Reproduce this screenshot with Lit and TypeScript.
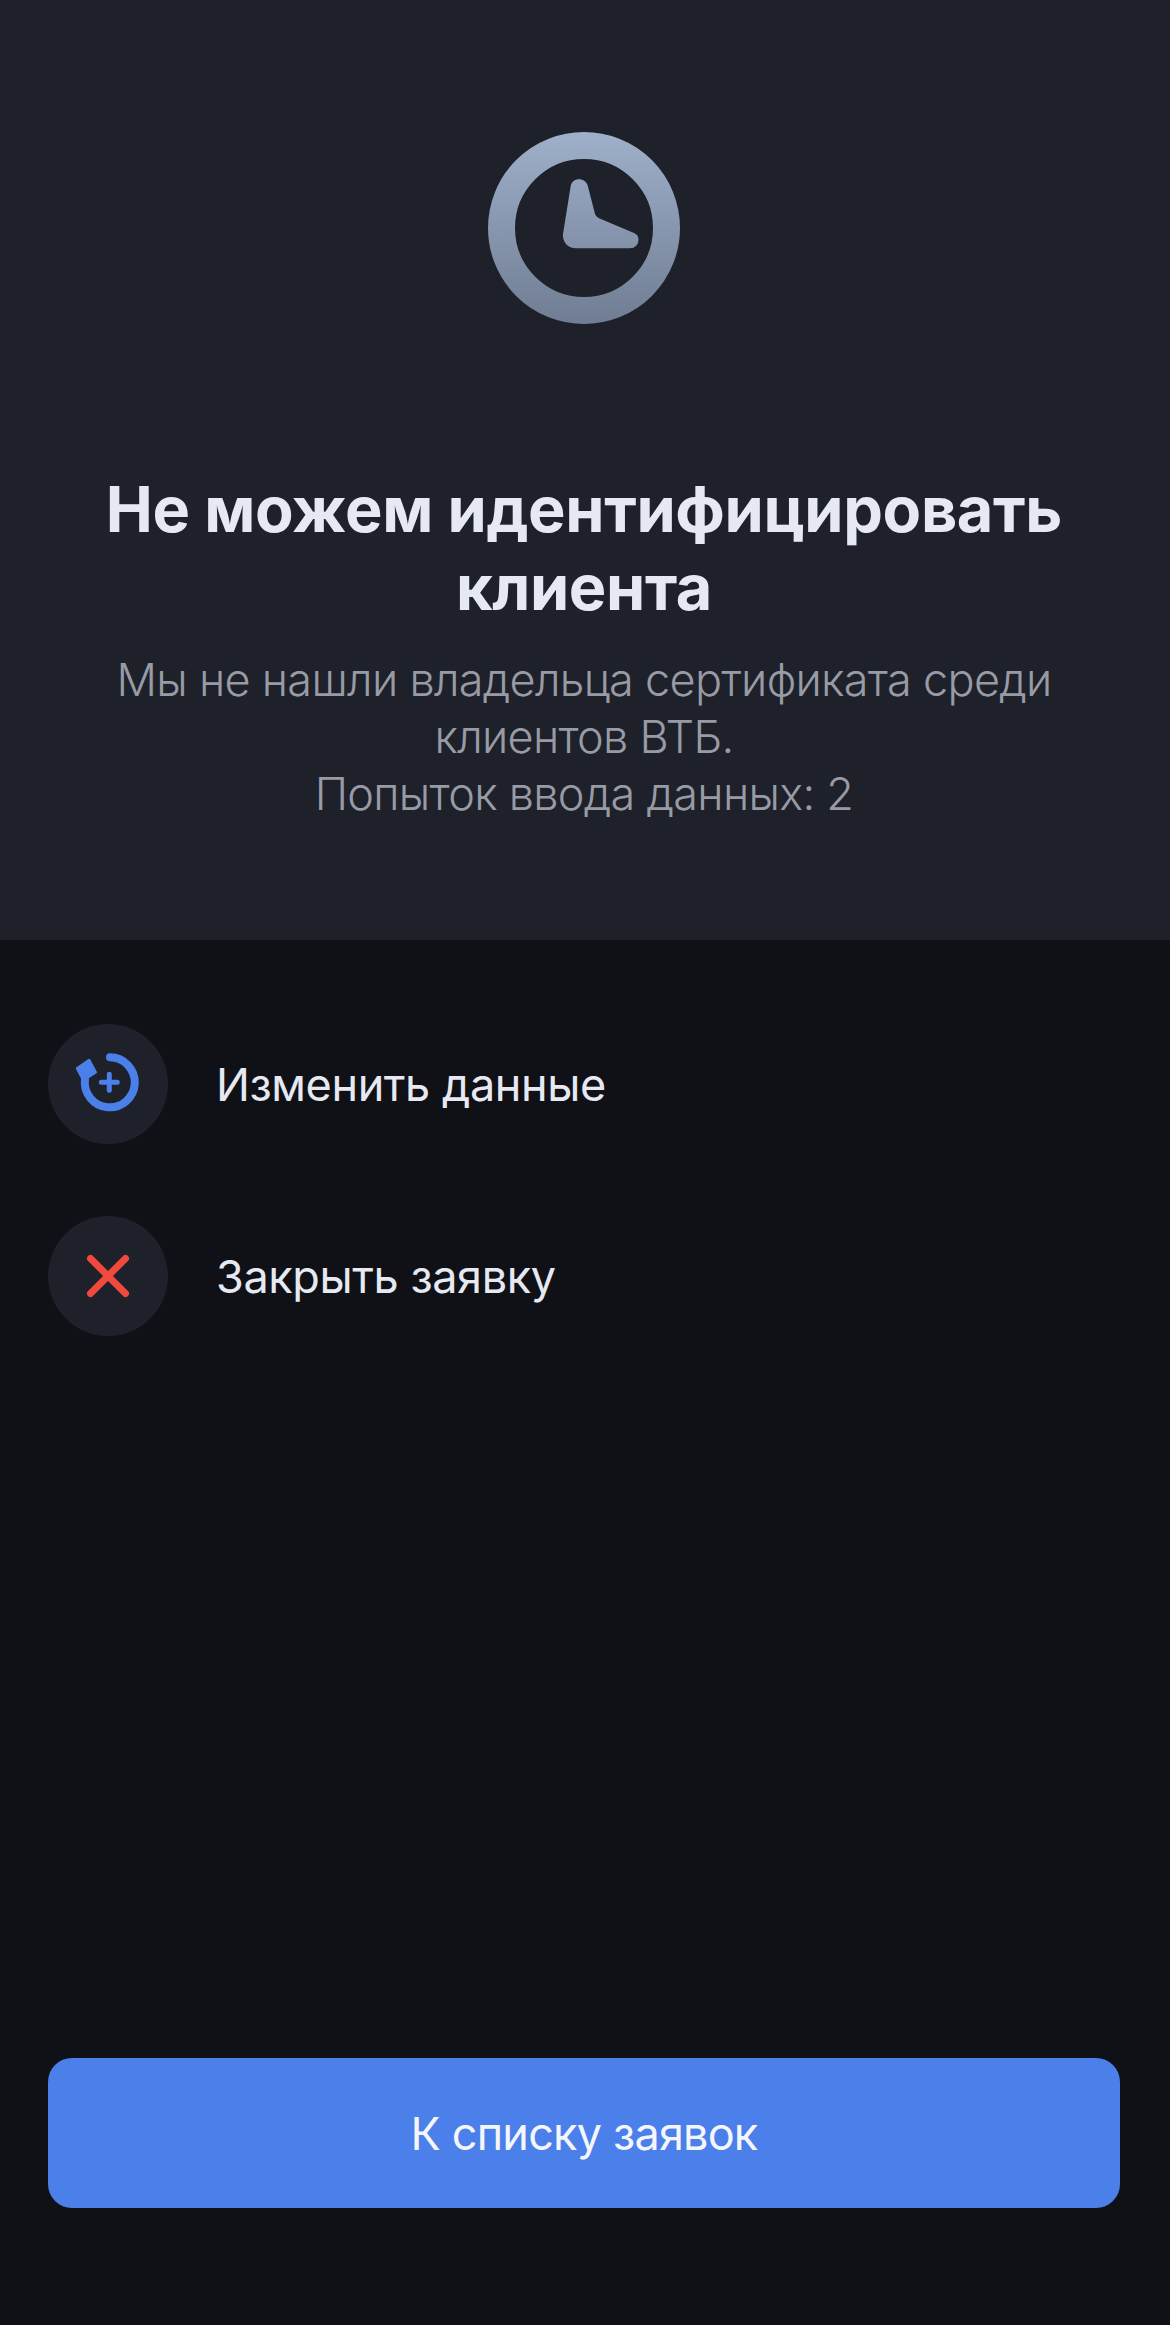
import { LitElement, html, css } from "lit";
import { customElement } from "lit/decorators.js";

@customElement("app-root")
export class AppRoot extends LitElement {
  static styles = css`
    :host {
      display: block;
      font-family: Inter, "Noto Sans", sans-serif;
    }
    .page {
      display: flex;
      flex-direction: column;
      min-height: 2325px;
      background: #0f1116;
    }
    .header {
      display: flex;
      flex-direction: column;
      align-items: center;
      height: 940px;
      box-sizing: border-box;
      padding: 132px 2px 0 0;
      background: #1e2129;
      text-align: center;
    }
    .clock {
      display: block;
      width: 192px;
      height: 192px;
    }
    h1 {
      margin: 146px 0 0;
      font-size: 63px;
      line-height: 78px;
      font-weight: 700;
      letter-spacing: -0.35px;
      color: #e6e9f2;
    }
    .sub {
      margin: 25px 0 0;
      font-size: 45px;
      line-height: 57px;
      font-weight: 300;
      letter-spacing: -0.7px;
      color: #989ba6;
    }
    .actions {
      display: flex;
      flex-direction: column;
      gap: 72px;
      padding: 84px 48px 0;
    }
    .action {
      display: flex;
      align-items: center;
      gap: 48px;
      font-size: 45px;
      font-weight: 400;
      letter-spacing: -0.4px;
      color: #e6e9f2;
    }
    .round {
      display: block;
      flex: none;
      width: 120px;
      height: 120px;
      border-radius: 50%;
      background: #1e2129;
    }
    .button {
      display: flex;
      align-items: center;
      justify-content: center;
      height: 150px;
      margin: auto 50px 117px 48px;
      border-radius: 24px;
      background: #4b7fea;
      color: #f4f6fb;
      font-size: 45px;
      font-weight: 400;
      letter-spacing: -0.8px;
    }
  `;

  render() {
    return html`
      <div class="page">
        <div class="header">
          <svg class="clock" viewBox="0 0 192 192">
            <defs>
              <linearGradient id="g" gradientUnits="userSpaceOnUse" x1="0" y1="0" x2="0" y2="192">
                <stop offset="0" stop-color="#9fb0ca" />
                <stop offset="1" stop-color="#707d93" />
              </linearGradient>
            </defs>
            <circle cx="96" cy="96" r="82.5" fill="none" stroke="url(#g)" stroke-width="27" />
            <path
              fill="url(#g)"
              d="M82.7 54C83.4 50 87 47.3 91 47.3C95 47.3 98.5 49.8 99.7 53.5L107 82Q107.7 84.7 110.5 86L146 101C149 102.3 150.5 104.5 150.5 107.5C150.5 112.5 147 116.3 142 116.3L88 116.3C80 116.3 74.2 110 75 102Z"
            />
          </svg>
          <h1>Не можем идентифицировать<br />клиента</h1>
          <p class="sub">
            Мы не нашли владельца сертификата среди<br />клиентов ВТБ.<br />Попыток ввода данных: 2
          </p>
        </div>
        <div class="actions">
          <div class="action">
            <svg class="round" viewBox="0 0 120 120">
              <path d="M62 33.3A25 25 0 1 1 37 55" fill="none" stroke="#4b7fea" stroke-width="8" stroke-linecap="round" />
              <path d="M28.7 44.3L41.3 35.7L48 48.3L35.3 56.7Z" fill="#4b7fea" stroke="#4b7fea" stroke-width="2" stroke-linejoin="round" />
              <path d="M53.3 58.3H69.3M61.3 50.3V66.3" fill="none" stroke="#4b7fea" stroke-width="5" stroke-linecap="round" />
            </svg>
            <span>Изменить данные</span>
          </div>
          <div class="action">
            <svg class="round" viewBox="0 0 120 120">
              <path d="M42.5 42.5L77.5 77.5M77.5 42.5L42.5 77.5" fill="none" stroke="#f0493e" stroke-width="7" stroke-linecap="round" />
            </svg>
            <span>Закрыть заявку</span>
          </div>
        </div>
        <div class="button">К списку заявок</div>
      </div>
    `;
  }
}
